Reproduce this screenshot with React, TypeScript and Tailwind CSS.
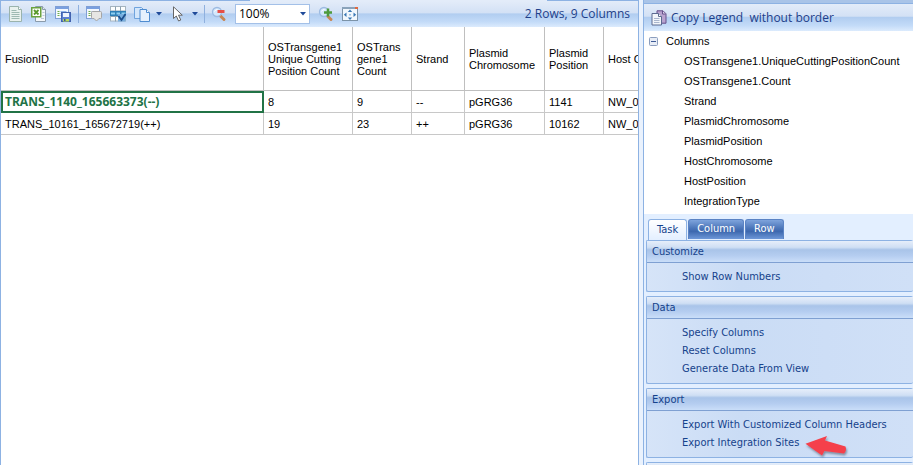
import { useState } from "react";
import type { ReactNode } from "react";

const gridFont = "font-['Liberation_Sans',Arial,sans-serif]";
const barFont = "font-['Open_Sans','Noto_Sans',sans-serif]";
const taskFont = "font-['DejaVu_Sans_Condensed','DejaVu_Sans',sans-serif]";

function Icon({ children }: { children: ReactNode }) {
  return (
    <svg width="16" height="16" viewBox="0 0 16 16" aria-hidden="true" className="block shrink-0">
      {children}
    </svg>
  );
}

function ReportIcon() {
  return (
    <Icon>
      <path d="M2.500 .5h9l3 3v12h-12z" fill="#e9f1ee" stroke="#9ab3ad" />
      <path d="M11.500 .5v3h3" fill="#fff" stroke="#9ab3ad" />
      <path d="M4.500 4.500h5M4.500 6.500h8M4.500 8.500h8M4.500 10.500h8M4.500 12.500h8" stroke="#9fb9b2" />
    </Icon>
  );
}

function ExcelIcon() {
  return (
    <Icon>
      <path d="M4.500 .5h7l3 3v12h-10z" fill="#f4f7fb" stroke="#8a9bab" />
      <path d="M11.500 .5v3h3" fill="#dfe7ef" stroke="#8a9bab" />
      <rect x=".75" y="1.750" width="9" height="9" fill="#fff" stroke="#6ba33f" strokeWidth="1.500" />
      <path d="M3 4l4.500 4.500M7.500 4L3 8.500" stroke="#5a9a2e" strokeWidth="1.800" />
      <path d="M10 12.500h3M11.500 6.500h2M11.500 9.500h2" stroke="#b9c8d6" />
    </Icon>
  );
}

function TableBase() {
  return (
    <>
      <rect x=".5" y=".5" width="13" height="12" fill="#f4f8fe" stroke="#7f9fd6" />
      <rect x="1" y="1" width="12" height="2" fill="#7aa0e0" />
      <path d="M2.500 5.500h2M2.500 7.500h2M2.500 9.500h2" stroke="#6fb04c" />
      <path d="M5.500 5.500h6M5.500 7.500h6M5.500 9.500h6" stroke="#8fb2e8" />
    </>
  );
}

function SaveTableIcon() {
  return (
    <Icon>
      <TableBase />
      <rect x="6.500" y="6.500" width="9" height="9" fill="#5c7fcf" stroke="#4262ae" />
      <rect x="8" y="7" width="6" height="4" fill="#eef3fc" />
      <rect x="8" y="13" width="6" height="2.500" fill="#b8d957" />
      <rect x="9" y="13" width="1.500" height="2" fill="#34539f" />
    </Icon>
  );
}

function CommentTableIcon() {
  return (
    <Icon>
      <TableBase />
      <path d="M5.500 6.500q0-1 1-1h8q1 0 1 1v5q0 1-1 1h-1.500l-2.500 2.500-2.500-2.500h-1.500q-1 0-1-1z" fill="#e6e6e4" stroke="#a5a5a5" />
    </Icon>
  );
}

function GridCheckIcon() {
  return (
    <Icon>
      <rect x=".5" y=".5" width="15" height="14.500" fill="#fdfefe" stroke="#a5b4bf" />
      <path d="M5.500 .5v15M10.500 .5v15M.5 5h15M.5 10.500h15" stroke="#8ca1b0" />
      <rect x="0" y="5" width="16" height="5" fill="#2e7fb6" />
      <path d="M1 7.500h4M6.500 7.500h3.500M11.500 7.500h4" stroke="#8fd0f2" strokeWidth="2" />
      <rect x="8" y="8" width="7.500" height="7.500" fill="#76aede" />
      <path d="M8.500 10l3 4 4-6" fill="none" stroke="#1c4d8c" strokeWidth="1.800" />
    </Icon>
  );
}

function CopyIcon() {
  return (
    <Icon>
      <path d="M.5 1.500h7l2 2v9h-9z" fill="#d3e6fb" stroke="#6fa3dd" />
      <path d="M6 3.500h6.500l3 3v9h-9.500z" fill="#e6f1fd" stroke="#4f8cd0" />
      <path d="M12.500 3.500v3h3" fill="#fff" stroke="#4f8cd0" />
    </Icon>
  );
}

function CursorIcon() {
  return (
    <Icon>
      <path d="M3.500 .8v11.700l2.800-2.500 2.300 5 2.200-1-2.300-4.800h3.800z" fill="#fff" stroke="#666" />
    </Icon>
  );
}

function ZoomIcon({ plus }: { plus?: boolean }) {
  return (
    <Icon>
      <path d="M9 9.500l4 4" stroke="#c78755" strokeWidth="3" strokeLinecap="round" />
      <circle cx="6" cy="6" r="4.500" fill="#d5e8fb" stroke="#9dbbe2" strokeWidth="1.300" />
      <path d="M3.500 5.500q1-2 3-2" fill="none" stroke="#fff" />
      {plus ? (
        <path d="M6 6.500h8M10 2.500v8" stroke="#4e9a3d" strokeWidth="2.500" />
      ) : (
        <path d="M6.500 5.500h7" stroke="#e64f47" strokeWidth="3" />
      )}
    </Icon>
  );
}

function FitIcon() {
  return (
    <Icon>
      <rect x=".5" y="1.500" width="15" height="13" fill="#f1f7fd" stroke="#7c93a8" />
      <rect x="0" y="1" width="16" height="2" fill="#8aa3ba" />
      <rect x="13" y="1" width="3" height="2" fill="#e0693f" />
      <path d="M8 3.500l2.200 2.500h-4.400zM8 14l2.200-2.500h-4.400zM1.800 8.700l2.700-2.200v4.400zM14.200 8.700l-2.700-2.200v4.400z" fill="#3a78b5" />
      <rect x="7" y="8" width="2" height="1.500" fill="#9ec0e0" />
    </Icon>
  );
}

function LegendCopyIcon() {
  return (
    <Icon>
      <path d="M6 .8h6l3 3v9.400h-9z" fill="#b9a3cf" stroke="#65508a" />
      <path d="M11.500 1v3h3" fill="#e7def0" stroke="#65508a" />
      <path d="M1 3.500h6.500l3 3v8.500h-9.500z" fill="#f2f5fa" stroke="#5c6a90" />
      <path d="M7.500 3.500v3h3" fill="#fff" stroke="#5c6a90" />
      <path d="M3 8.500h5.500M3 10.500h5.500M3 12.500h5.500" stroke="#a9b5cd" />
    </Icon>
  );
}

function DownTriangle() {
  return (
    <svg width="6" height="4" viewBox="0 0 6 4" aria-hidden="true" className="block shrink-0">
      <path d="M0 0h6L3 3.500z" fill="#1f4a99" />
    </svg>
  );
}

function ToolButton({ label, children }: { label: string; children: ReactNode }) {
  return (
    <button type="button" aria-label={label} className="flex items-center gap-1.5">
      {children}
    </button>
  );
}

function Separator() {
  return <div className="h-[18px] w-px bg-[#8fb0de]" />;
}

function Toolbar() {
  return (
    <div className="flex h-[26px] shrink-0 items-center bg-[linear-gradient(#e3ecf9_0%,#d3e1f5_45%,#b1cdf0_50%,#c3dbf8_80%,#dcebfd_100%)] pl-[6px]">
      <div className="flex items-center gap-2">
        <ToolButton label="Report"><ReportIcon /></ToolButton>
        <ToolButton label="Excel"><ExcelIcon /></ToolButton>
        <ToolButton label="Save table"><SaveTableIcon /></ToolButton>
      </div>
      <div className="mx-[7px]"><Separator /></div>
      <div className="flex items-center gap-2">
        <ToolButton label="Annotate"><CommentTableIcon /></ToolButton>
        <ToolButton label="Select columns"><GridCheckIcon /></ToolButton>
        <ToolButton label="Copy"><CopyIcon /><DownTriangle /></ToolButton>
        <ToolButton label="Pointer"><CursorIcon /><DownTriangle /></ToolButton>
      </div>
      <div className="mx-[6px]"><Separator /></div>
      <div className="flex items-center gap-2">
        <ToolButton label="Zoom out"><ZoomIcon /></ToolButton>
        <div className="relative">
          <select
            aria-label="Zoom"
            defaultValue="100%"
            className={`${barFont} block h-5 w-[75px] appearance-none border border-[#a3c0e8] bg-white pl-[3px] text-[12px] leading-[18px] text-black`}
          >
            <option>50%</option>
            <option>100%</option>
            <option>200%</option>
          </select>
          <div className="pointer-events-none absolute top-2 right-1">
            <DownTriangle />
          </div>
        </div>
        <ToolButton label="Zoom in"><ZoomIcon plus /></ToolButton>
        <ToolButton label="Fit"><FitIcon /></ToolButton>
      </div>
      <span className={`${barFont} ml-auto pr-2 text-[12px] whitespace-nowrap text-[#1e3f8a]`}>2 Rows, 9 Columns</span>
    </div>
  );
}

const headers = [
  "OSTransgene1 Unique Cutting Position Count",
  "OSTrans gene1 Count",
  "Strand",
  "Plasmid Chromosome",
  "Plasmid Position",
  "Host C",
];

const rows = [
  ["TRANS_1140_165663373(--)", "8", "9", "--", "pGRG36", "1141", "NW_0"],
  ["TRANS_10161_165672719(++)", "19", "23", "++", "pGRG36", "10162", "NW_0"],
];

function DataGrid() {
  return (
    <div className="min-h-0 flex-1 overflow-hidden bg-white">
      <table className={`${gridFont} w-full table-fixed border-separate border-spacing-0 text-[11px] leading-[12px] text-black`}>
        <colgroup>
          <col className="w-[263px]" />
          <col className="w-[89px]" />
          <col className="w-[59px]" />
          <col className="w-[53px]" />
          <col className="w-[80px]" />
          <col className="w-[59px]" />
          <col />
        </colgroup>
        <thead>
          <tr className="h-16">
            <th scope="col" className="border-r border-b border-[#bfbfbf] px-1 text-left align-middle font-normal">FusionID</th>
            {headers.map((h) => (
              <th
                key={h}
                scope="col"
                className="border-r border-b border-[#bfbfbf] pr-0 pl-1 text-left align-middle font-normal last:border-r-0 last:whitespace-nowrap"
              >
                {h}
              </th>
            ))}
          </tr>
        </thead>
        <tbody>
          {rows.map((row, r) => (
            <tr key={row[0]} className="h-[22px]">
              {row.map((cell, c) => (
                <td
                  key={c}
                  className={
                    r === 0 && c === 0
                      ? "border-2 border-[#217346] px-[2px] py-0 font-['Open_Sans','Noto_Sans',sans-serif] text-[12px] font-bold text-[#217346]"
                      : "border-r border-b border-[#c8c8c8] py-0 pr-0 pl-1 last:border-r-0"
                  }
                >
                  {cell}
                </td>
              ))}
            </tr>
          ))}
        </tbody>
      </table>
    </div>
  );
}

const legend = [
  "OSTransgene1.UniqueCuttingPositionCount",
  "OSTransgene1.Count",
  "Strand",
  "PlasmidChromosome",
  "PlasmidPosition",
  "HostChromosome",
  "HostPosition",
  "IntegrationType",
];

function LegendTree() {
  return (
    <div className={`${gridFont} bg-white pb-[3px] text-[11px] leading-5 text-black`}>
      <div className="flex items-center pl-[5px]">
        <button type="button" aria-label="Collapse Columns">
          <svg width="9" height="9" viewBox="0 0 9 9" className="block">
            <rect x=".5" y=".5" width="8" height="8" rx="1" fill="#e8edf6" stroke="#8b9dbd" />
            <path d="M2 4.500h5" stroke="#3d5a96" />
          </svg>
        </button>
        <span className="pl-2">Columns</span>
      </div>
      <ul className="pl-10">
        {legend.map((item) => (
          <li key={item}>{item}</li>
        ))}
      </ul>
    </div>
  );
}

const tabs = ["Task", "Column", "Row"];

function Tabs() {
  const [active, setActive] = useState("Task");
  return (
    <div role="tablist" className={`${taskFont} flex h-[26px] shrink-0 items-end gap-px bg-[#e3efff] pl-1 text-[11px]`}>
      {tabs.map((tab) => (
        <button
          key={tab}
          type="button"
          role="tab"
          aria-selected={active === tab}
          onClick={() => setActive(tab)}
          className={
            active === tab
              ? "h-[21px] rounded-t-[3px] border border-b-0 border-[#8db2e3] bg-[linear-gradient(#ffffff,#e3efff)] px-2 text-[#15428b]"
              : "mb-px h-5 rounded-t-[3px] border border-b-0 border-[#5a83c4] bg-[linear-gradient(#7ea3dc_0%,#4a74b8_45%,#3d68ae_60%,#6d97d8_100%)] px-2 text-white"
          }
        >
          {tab}
        </button>
      ))}
    </div>
  );
}

function RedArrow() {
  return (
    <svg width="46" height="26" viewBox="0 0 46 26" aria-hidden="true" className="absolute top-0 left-full ml-[6px]">
      <defs>
        <filter id="arrowShadow" x="-20%" y="-20%" width="150%" height="160%">
          <feDropShadow dx="1" dy="2" stdDeviation="1" floodColor="#4a5568" floodOpacity=".6" />
        </filter>
      </defs>
      <path
        d="M.5 9.700L22 2l-2 4.500L40.500 12.500q1.500 4-1.500 7L19.500 17l-2.500 4.500z"
        fill="#f5414b"
        filter="url(#arrowShadow)"
      />
    </svg>
  );
}

function Section({ title, items = [], marked }: { title?: string; items?: string[]; marked?: string }) {
  return (
    <section className="shrink-0 rounded-[2px] border border-r-0 border-[#8db2e3] bg-[linear-gradient(90deg,#d6e4f8,#cadcf5_35%,#d0e0f7)]">
      <h2 className="h-[22px] border-b border-[#7fa0d2] bg-[linear-gradient(#e6eefa_0%,#cfdff4_30%,#a9c4e9_42%,#b5cdf0_70%,#cadef9_100%)] pl-[5px] leading-[22px]">
        {title}
      </h2>
      <ul className="py-[5px] pl-[35px]">
        {items.map((item) => (
          <li key={item} className="h-[18px] leading-[18px]">
            <button type="button" className="relative block whitespace-nowrap">
              {item}
              {item === marked && <RedArrow />}
            </button>
          </li>
        ))}
      </ul>
    </section>
  );
}

export default function App() {
  return (
    <div className="flex h-screen overflow-hidden bg-[#e3efff]">
      <main className="flex min-w-0 flex-1 flex-col border-r border-l border-[#8db2e3]">
        <div className="flex h-px shrink-0">
          <div className="w-[249px] bg-[#8db2e3]" />
          <div className="flex-1 bg-[#e3ecf9]" />
          <div className="w-[91px] bg-[#8db2e3]" />
        </div>
        <Toolbar />
        <DataGrid />
      </main>
      <div className="w-1 shrink-0 bg-[#eaf2fd]" />
      <aside className="flex w-[270px] shrink-0 flex-col border-l border-[#8db2e3]">
        <div className="h-1 shrink-0 border-b border-[#8db2e3] bg-[#a9c4e8]" />
        <button
          type="button"
          className={`${barFont} flex h-[27px] shrink-0 items-center bg-[linear-gradient(#e3ecf9_0%,#d3e1f5_45%,#b1cdf0_50%,#c3dbf8_80%,#dcebfd_100%)] pl-[7px] text-[12px] whitespace-pre text-[#1e3f8a]`}
        >
          <LegendCopyIcon />
          <span className="pl-1">{"Copy Legend  without border"}</span>
        </button>
        <LegendTree />
        <Tabs />
        <div className={`${taskFont} flex min-h-0 flex-1 flex-col gap-1 overflow-hidden pl-[2px] text-[11px] text-[#15428b]`}>
          <Section title="Customize" items={["Show Row Numbers"]} />
          <Section title="Data" items={["Specify Columns", "Reset Columns", "Generate Data From View"]} />
          <Section
            title="Export"
            items={["Export With Customized Column Headers", "Export Integration Sites"]}
            marked="Export Integration Sites"
          />
          <Section />
        </div>
      </aside>
    </div>
  );
}
